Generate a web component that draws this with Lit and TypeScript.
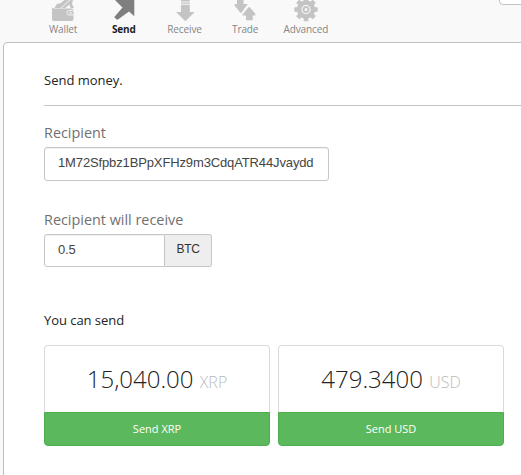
import { LitElement, html, css, svg } from "lit";
import { customElement } from "lit/decorators.js";

const icons = {
  wallet: svg`<path d="M7.500 8 L10 3.800 L13 3.500 L17.500 0 H22.500 L13.500 8Z M14.500 8 L23.500 0 H26 L25 4 L27 8 H23.500 L22.300 4.500 L18.500 8Z"/>
    <path d="M5 7.500 Q6 8.500 8 8.500 H24.500 Q26.500 8.500 26.500 10 V19 Q26.500 21 24.500 21 H6.500 Q5 21 5 19Z"/>
    <path d="M26.500 10.500 H21.500 Q20 10.500 20 12 V13.500 Q20 15 21.500 15 H26.500" fill="none" stroke="#f3f3f3"/><rect x="22.500" y="12" width="2" height="1.700" fill="#f3f3f3"/>`,
  send: svg`<path d="M7 0 H26.300 V16.300 L21 11.500 L10 19.500 L8.500 19.500 L6.300 17 L14.500 7.500Z"/>`,
  receive: svg`<path d="M12 0 h8.800 v1.500 h-8.800z M12 2.400 h8.800 v1.400 h-8.800z M12 4.700 h8.800 v7.300 h5 L16.400 21.300 L7 12 h5z"/>`,
  trade: svg`<path d="M8 0 H14.500 V4 H18.700 L12.500 12.700 H11.300 L5.500 5.500 V4 H8Z M19.500 7.300 H20.700 L26.300 13.500 V15.500 H23.700 V20.300 H17 V15.500 H13.500 V14.500Z"/>`,
  advanced: svg`<circle cx="16" cy="9.500" r="6.900" fill="none" stroke="currentColor" stroke-width="4.600"/><circle cx="16" cy="9.500" r="2.500" fill="none" stroke="currentColor" stroke-width="2"/>
    <g>${[0, 45, 90, 135, 180, 225, 270, 315].map((a) => svg`<rect x="13.700" y="-2.200" width="4.600" height="5" rx=".5" transform="rotate(${a} 16 9.500)"/>`)}</g>`,
};

@customElement("app-root")
export class AppRoot extends LitElement {
  static styles = css`
    :host { display: block; height: 475px; overflow: hidden; position: relative; background: #f9f9f9; font-family: "Open Sans", sans-serif; color: #222; }
    * { box-sizing: border-box; }
    .nav { height: 42px; display: flex; padding-left: 32.800px; }
    .tab { width: 60.700px; display: flex; flex-direction: column; align-items: center; color: #c4c4c4; }
    .tab svg { width: 32px; height: 22px; fill: currentColor; display: block; }
    .tab span { font-size: 10px; line-height: 14px; letter-spacing: -.12px; color: #858585; white-space: nowrap; }
    .tab.active { color: #7f7f7f; }
    .tab.active span { color: #222; font-weight: 700; }
    .corner { position: absolute; left: 499px; top: -10px; width: 40px; height: 15px; background: #fff; border: 1px solid #c4c4c4; border-radius: 4px; }
    .panel { margin-left: 3px; width: 540px; height: 450px; background: #fff; border: 1px solid #bfbfbf; border-radius: 4px; padding: 28px 0 0 40px; }
    .title { font-size: 13px; line-height: 18px; padding-bottom: 16px; border-bottom: 1px solid #c4c4c4; }
    .label { font-size: 14.400px; line-height: 20px; color: #707070; }
    .field { height: 34px; width: 285px; border: 1px solid #c6c6c6; border-radius: 3px; padding: 0 13px; font: 13px/30px "Liberation Sans", sans-serif; letter-spacing: -.13px; color: #444; box-shadow: inset 0 1px 1px #00000010; }
    .first { margin-top: 17px; }
    .gap { margin-top: 29px; }
    .label + * { margin-top: 4px; }
    .group { display: flex; }
    .amount { width: 121px; height: 33px; border-radius: 3px 0 0 3px; }
    .unit { width: 47px; height: 33px; border: 1px solid #c6c6c6; border-left: 0; border-radius: 0 3px 3px 0; background: #eee; font: 12px/29px "Liberation Sans", sans-serif; letter-spacing: -.3px; text-align: center; color: #333; }
    .sub { font-size: 13px; line-height: 18px; margin-top: 44px; letter-spacing: -.05px; }
    .cards { display: flex; gap: 8px; margin-top: 16px; }
    .card { width: 226px; height: 101px; display: flex; flex-direction: column; }
    .value { height: 67px; border: 1px solid #dadada; border-bottom: 0; border-radius: 4px 4px 0 0; text-align: center; font-size: 24px; font-weight: 300; line-height: 66px; }
    .value small { font-size: 16px; color: #bbb; }
    .button { height: 34px; background: #5cb85c; border: 1px solid #4cae4c; border-radius: 0 0 4px 4px; color: #fff; text-align: center; font-size: 11px; line-height: 32px; }
  `;

  tab(name: string, icon: keyof typeof icons) {
    return html`<div class="tab ${name === "Send" ? "active" : ""}"><svg viewBox="0 0 32 22">${icons[icon]}</svg><span>${name}</span></div>`;
  }

  card(value: string, unit: string) {
    return html`<div class="card"><div class="value">${value} <small>${unit}</small></div><div class="button">Send ${unit}</div></div>`;
  }

  render() {
    return html`
      <div class="nav">${this.tab("Wallet", "wallet")}${this.tab("Send", "send")}${this.tab("Receive", "receive")}${this.tab("Trade", "trade")}${this.tab("Advanced", "advanced")}</div>
      <div class="corner"></div>
      <div class="panel">
        <div class="title">Send money.</div>
        <div class="label first">Recipient</div>
        <div class="field">1M72Sfpbz1BPpXFHz9m3CdqATR44Jvaydd</div>
        <div class="label gap">Recipient will receive</div>
        <div class="group"><div class="field amount">0.5</div><div class="unit">BTC</div></div>
        <div class="sub">You can send</div>
        <div class="cards">${this.card("15,040.00", "XRP")}${this.card("479.3400", "USD")}</div>
      </div>`;
  }
}
